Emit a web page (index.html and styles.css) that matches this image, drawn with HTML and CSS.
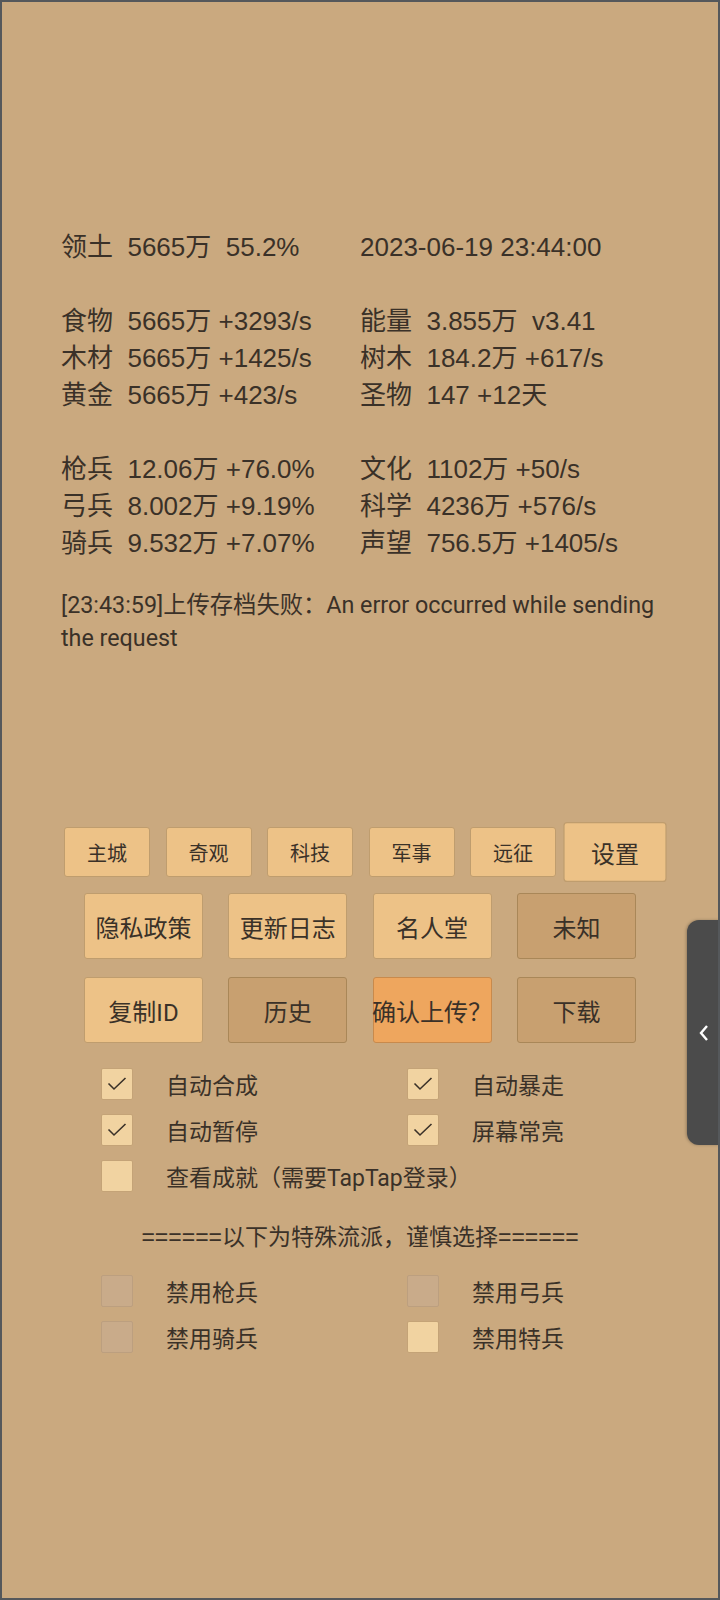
FILE: index.html
```html
<!DOCTYPE html>
<html lang="zh">
<head>
    <meta charset="UTF-8">
    <meta name="viewport" content="width=device-width, initial-scale=1.0">
    <title>设置</title>
    <link rel="stylesheet" href="styles.css">
</head>
<body>

<div class="page">
    <div class="stats">
        <div class="line">领土  5665万  55.2%</div>
        <div class="line">2023-06-19 23:44:00</div>
        <div class="line"> </div>
        <div class="line"> </div>
        <div class="line">食物  5665万 +3293/s</div>
        <div class="line">能量  3.855万  v3.41</div>
        <div class="line">木材  5665万 +1425/s</div>
        <div class="line">树木  184.2万 +617/s</div>
        <div class="line">黄金  5665万 +423/s</div>
        <div class="line">圣物  147 +12天</div>
        <div class="line"> </div>
        <div class="line"> </div>
        <div class="line">枪兵  12.06万 +76.0%</div>
        <div class="line">文化  1102万 +50/s</div>
        <div class="line">弓兵  8.002万 +9.19%</div>
        <div class="line">科学  4236万 +576/s</div>
        <div class="line">骑兵  9.532万 +7.07%</div>
        <div class="line">声望  756.5万 +1405/s</div>
    </div>

    <p class="log">[23:43:59]上传存档失败：An error occurred while sending the request</p>

    <div class="tabs">
        <div class="btn tab">主城</div>
        <div class="btn tab">奇观</div>
        <div class="btn tab">科技</div>
        <div class="btn tab">军事</div>
        <div class="btn tab">远征</div>
        <div class="btn tab current">设置</div>
    </div>

    <div class="actions">
        <div class="btn big">隐私政策</div>
        <div class="btn big">更新日志</div>
        <div class="btn big">名人堂</div>
        <div class="btn big off">未知</div>
    </div>
    <div class="actions">
        <div class="btn big">复制ID</div>
        <div class="btn big off">历史</div>
        <div class="btn big warn">确认上传？</div>
        <div class="btn big off">下载</div>
    </div>

    <div class="options">
        <label class="opt"><span class="box"><svg viewBox="0 0 20 14" width="20" height="14"><polyline points="1.5,6.5 7,12 18.5,1"/></svg></span>自动合成</label>
        <label class="opt"><span class="box"><svg viewBox="0 0 20 14" width="20" height="14"><polyline points="1.5,6.5 7,12 18.5,1"/></svg></span>自动暴走</label>
        <label class="opt"><span class="box"><svg viewBox="0 0 20 14" width="20" height="14"><polyline points="1.5,6.5 7,12 18.5,1"/></svg></span>自动暂停</label>
        <label class="opt"><span class="box"><svg viewBox="0 0 20 14" width="20" height="14"><polyline points="1.5,6.5 7,12 18.5,1"/></svg></span>屏幕常亮</label>
        <label class="opt wide"><span class="box"></span>查看成就（需要TapTap登录）</label>
    </div>

    <div class="divider">======以下为特殊流派，谨慎选择======</div>

    <div class="options special">
        <label class="opt"><span class="box disabled"></span>禁用枪兵</label>
        <label class="opt"><span class="box disabled"></span>禁用弓兵</label>
        <label class="opt"><span class="box disabled"></span>禁用骑兵</label>
        <label class="opt"><span class="box"></span>禁用特兵</label>
    </div>

    <div class="drawer">
        <svg viewBox="0 0 12 20" width="12" height="20"><polyline points="9,3 3,10 9,17"/></svg>
    </div>
</div>

</body>
</html>
```

FILE: styles.css
```css
body {
    margin: 0;
    font-family: Roboto, "Noto Sans CJK SC", sans-serif;
    color: #3a3128;
}
.page {
    position: relative;
    width: 720px;
    height: 1600px;
    box-sizing: border-box;
    border: 2px solid #55585b;
    background-color: #caa97f;
    overflow: hidden;
}
.stats {
    display: grid;
    grid-template-columns: 299px 1fr;
    padding: 227px 0 0 59px;
    font-family: "Liberation Sans", "Noto Sans CJK SC", sans-serif;
    font-size: 26px;
    line-height: 37px;
}
.line {
    white-space: pre;
}
.log {
    width: 620px;
    margin: 27px 0 0 59px;
    font-size: 23.3px;
    line-height: 33px;
}
.tabs {
    display: flex;
    align-items: center;
    gap: 15.5px;
    margin-top: 172px;
    padding-left: 62px;
}
.btn {
    display: flex;
    align-items: center;
    justify-content: center;
    box-sizing: border-box;
    background-color: #edc287;
    border: 1px solid #bf9d6e;
    border-radius: 3px;
    white-space: nowrap;
}
.tab {
    width: 86px;
    height: 50px;
    font-size: 20px;
}
.tab.current {
    transform: scale(1.2);
}
.actions {
    display: flex;
    gap: 25.3px;
    margin-top: 16px;
    padding-left: 82px;
}
.actions + .actions {
    margin-top: 18px;
}
.big {
    width: 119px;
    height: 66px;
    font-size: 24px;
}
.off {
    background-color: #c8a070;
    border-color: #a98758;
}
.warn {
    background-color: #eea65e;
    border-color: #c88a4c;
}
.options {
    display: grid;
    grid-template-columns: 306px 1fr;
    grid-auto-rows: 46px;
    margin-top: 18px;
    padding-left: 99px;
    font-size: 23px;
}
.opt {
    display: flex;
    align-items: center;
    gap: 33px;
}
.wide {
    grid-column: 1 / 3;
}
.box {
    display: flex;
    align-items: center;
    justify-content: center;
    width: 32px;
    height: 32px;
    box-sizing: border-box;
    background-color: #f1d3a1;
    border: 1px solid #c4a377;
    border-radius: 2px;
}
.box svg polyline {
    fill: none;
    stroke: #3a3128;
    stroke-width: 1.6;
}
.box.disabled {
    background-color: #c9ab8a;
    border-color: #bc9f7f;
}
.divider {
    margin: 15px 0 0 0;
    text-align: center;
    font-family: "Liberation Sans", "Noto Sans CJK SC", sans-serif;
    font-size: 23px;
    line-height: 46px;
}
.special {
    margin-top: 8px;
}
.drawer {
    position: absolute;
    top: 918px;
    right: -2px;
    width: 33px;
    height: 225px;
    display: flex;
    align-items: center;
    justify-content: center;
    background-color: #4b4b4b;
    border-radius: 12px 0 0 12px;
    box-shadow: -1px 0 3px rgba(0,0,0,0.25);
}
.drawer svg polyline {
    fill: none;
    stroke: #ffffff;
    stroke-width: 2.4;
}
```
